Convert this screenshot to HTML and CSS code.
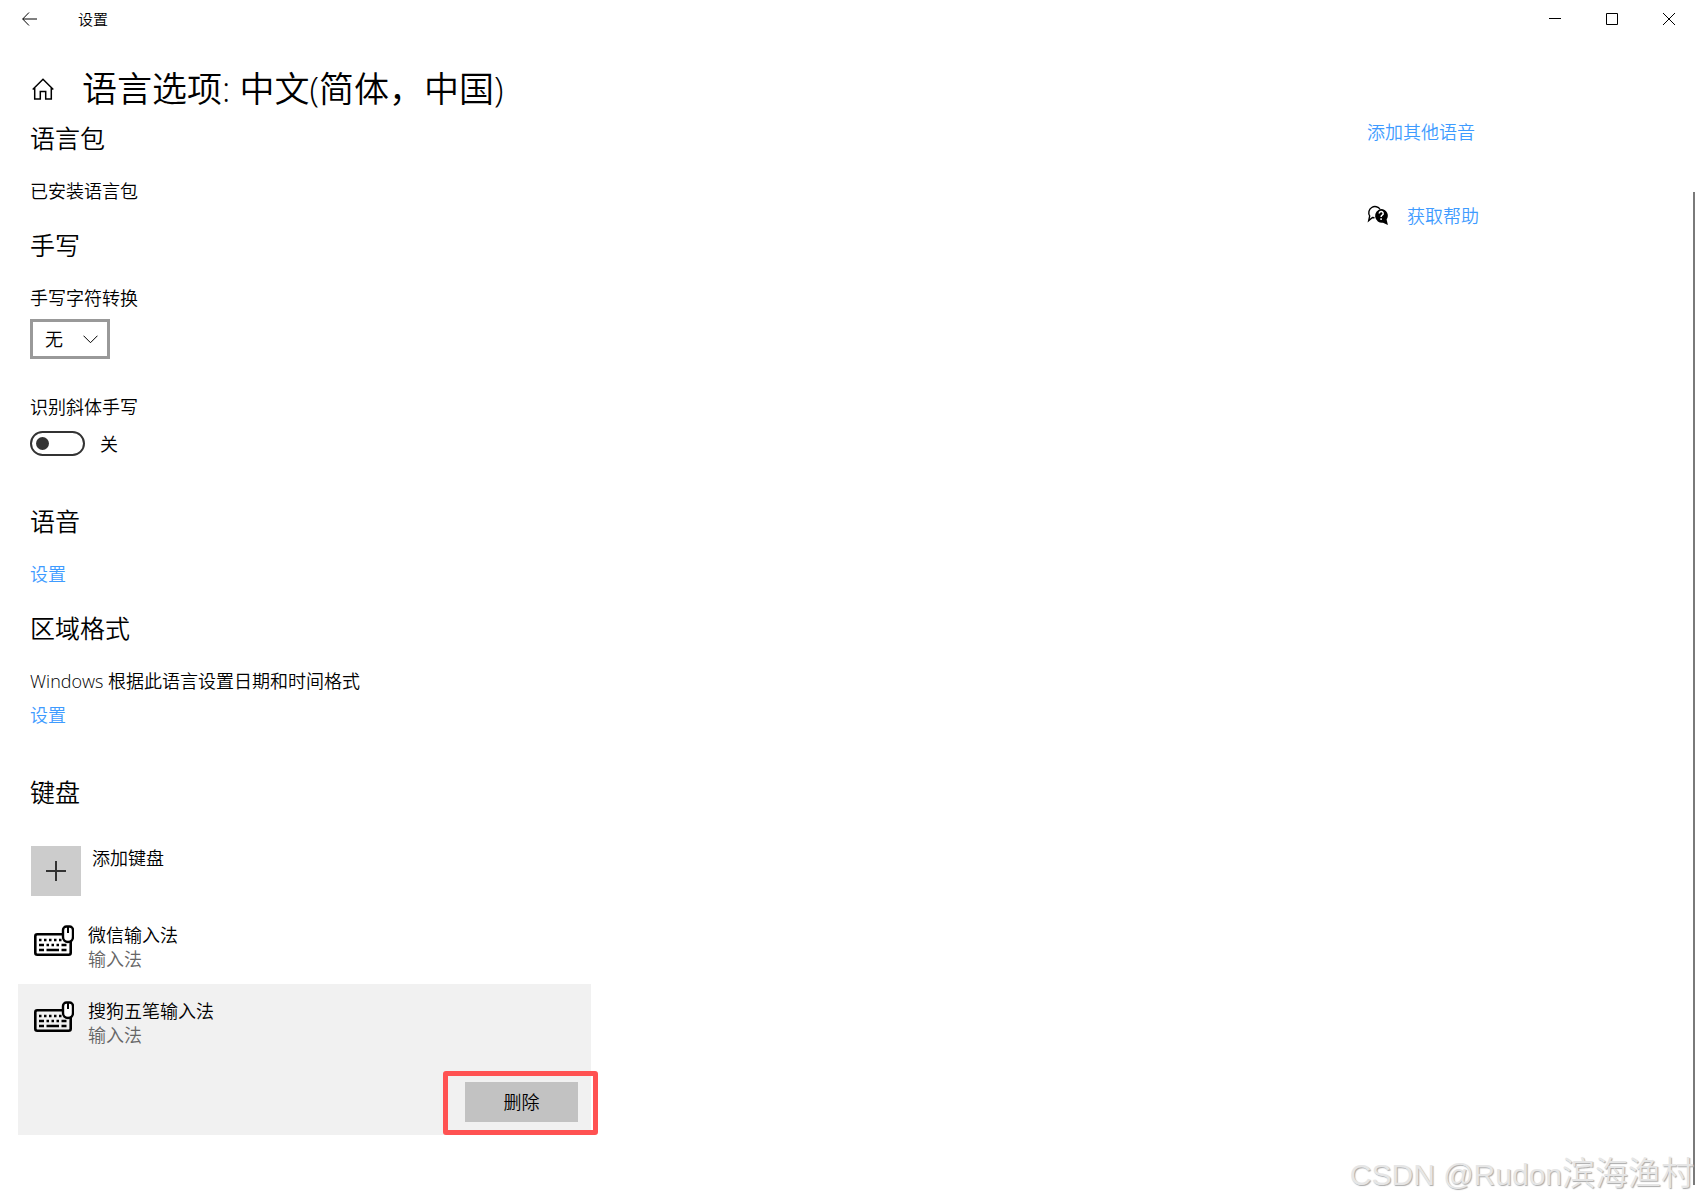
FILE: index.html
```html
<!DOCTYPE html>
<html lang="zh-CN">
<head>
    <meta charset="UTF-8">
    <meta name="viewport" content="width=device-width, initial-scale=1.0">
    <title>设置</title>
    <link rel="stylesheet" href="styles.css">
</head>
<body>
    <svg class="sprite" aria-hidden="true">
        <symbol id="icon-keyboard" viewBox="0 0 40 32">
            <rect x="1.300" y="9.200" width="35.400" height="20.600" rx="2" fill="none" stroke="currentColor" stroke-width="2.600"/>
            <path d="M5 15h2.500M10 15h2.500M15 15h2.500M20 15h2.500M25 15h2.500M5 20h5M12.500 20h2.500M17.500 20h2.500M22.500 20h2.500M27.500 20h5M5 25h5M12.500 25h12.500M27.500 25h5" fill="none" stroke="currentColor" stroke-width="2.300"/>
            <path class="mouse" d="M29 5a3.500 3.500 0 0 1 3.500-3.500h3a3.500 3.500 0 0 1 3.500 3.500v7a5 5 0 0 1-10 0z" stroke="currentColor" stroke-width="2.400"/>
            <path d="M34 1v7" fill="none" stroke="currentColor" stroke-width="2"/>
        </symbol>
    </svg>

    <header class="titlebar">
        <button class="back" type="button" aria-label="返回">
            <svg width="16" height="14" viewBox="0 0 16 14"><path d="M7 .5.7 7 7 13.500M.7 7H15"/></svg>
        </button>
        <span class="window-title">设置</span>
        <div class="window-buttons">
            <button type="button" aria-label="最小化">
                <svg width="12" height="12" viewBox="0 0 12 12"><path d="M0 5.500h12"/></svg>
            </button>
            <button type="button" aria-label="最大化">
                <svg width="12" height="12" viewBox="0 0 12 12"><path d="M.5.5h11v11H.5z"/></svg>
            </button>
            <button type="button" aria-label="关闭">
                <svg width="12" height="12" viewBox="0 0 12 12"><path d="M0 0l12 12M12 0L0 12"/></svg>
            </button>
        </div>
    </header>

    <div class="page-title">
        <a class="home" href="#" aria-label="主页">
            <svg width="22" height="22" viewBox="0 0 22 22"><path d="M.7 11.500 11 1.200l10.300 10.300M2.700 9.800V21h5.600v-7.500h5.400V21h5.600V9.800"/></svg>
        </a>
        <h1>语言选项: 中文(简体，中国)</h1>
    </div>

    <div class="content">
        <main>
            <section>
                <h2>语言包</h2>
                <p>已安装语言包</p>
            </section>

            <section class="spaced">
                <h2>手写</h2>
                <label for="convert">手写字符转换</label>
                <div class="select">
                    <select id="convert">
                        <option>无</option>
                        <option>简体</option>
                        <option>繁体</option>
                    </select>
                    <svg width="15" height="9" viewBox="0 0 15 9"><path d="M.5.7l7 7 7-7"/></svg>
                </div>
                <label for="cursive">识别斜体手写</label>
                <div class="toggle">
                    <input type="checkbox" id="cursive">
                    <span>关</span>
                </div>
            </section>

            <section>
                <h2>语音</h2>
                <p><a href="#">设置</a></p>
            </section>

            <section class="spaced">
                <h2>区域格式</h2>
                <p>Windows 根据此语言设置日期和时间格式</p>
                <p class="more"><a href="#">设置</a></p>
            </section>

            <section class="keyboards">
                <h2>键盘</h2>
                <button class="add" type="button">
                    <span class="tile">
                        <svg width="20" height="20" viewBox="0 0 20 20"><path d="M10 0v20M0 10h20"/></svg>
                    </span>
                    <span>添加键盘</span>
                </button>
                <ul>
                    <li>
                        <svg class="keyboard" width="40" height="32"><use href="#icon-keyboard"/></svg>
                        <div class="info">
                            <div>微信输入法</div>
                            <div class="kind">输入法</div>
                        </div>
                    </li>
                    <li class="selected">
                        <svg class="keyboard" width="40" height="32"><use href="#icon-keyboard"/></svg>
                        <div class="info">
                            <div>搜狗五笔输入法</div>
                            <div class="kind">输入法</div>
                        </div>
                        <button class="remove" type="button">删除</button>
                    </li>
                </ul>
            </section>
        </main>

        <aside>
            <a href="#">添加其他语音</a>
            <div class="help">
                <svg width="22" height="22" viewBox="0 0 22 22">
                    <path d="M7.500 12.700 5.500 12.500 1.700 15.600 2.700 11A6 6 0 1 1 13.200 4.500" fill="none" stroke="#000" stroke-width="1.400"/>
                    <path d="M14 4a6.700 6.700 0 0 1 5.600 10.500l1.300 5.500-4.900-2.300A6.900 6.900 0 1 1 14 4z"/>
                    <path d="M12.200 8.500a2 2 0 1 1 3 1.700c-.8.5-1.100.8-1.100 1.800M14.100 13.200v1.700" fill="none" stroke="#fff" stroke-width="1.500"/>
                </svg>
                <a href="#">获取帮助</a>
            </div>
        </aside>
    </div>

    <div class="scroll-thumb"></div>
    <div class="watermark"><span>CSDN @Rudon</span>滨海渔村</div>
</body>
</html>
```

FILE: styles.css
```css
* {
    box-sizing: border-box;
}
body {
    position: relative;
    margin: 0;
    min-height: 100vh;
    background-color: #fff;
    color: #000;
    font-family: "Open Sans", "Noto Sans CJK SC", sans-serif;
    font-weight: 350;
    font-size: 18px;
    line-height: 24px;
}
h1, h2, p, ul {
    margin: 0;
    padding: 0;
    font-weight: 350;
}
button, select {
    border: none;
    background: none;
    padding: 0;
    color: inherit;
    font: inherit;
}
a {
    color: #3e9bff;
    text-decoration: none;
}
svg {
    display: block;
    flex-shrink: 0;
}
.sprite {
    position: absolute;
    width: 0;
    height: 0;
}
.titlebar svg, .home svg, .select svg, .tile svg {
    fill: none;
    stroke: #000;
}

/* window chrome */
.titlebar {
    display: flex;
    align-items: center;
    height: 38px;
    font-size: 15px;
}
.back {
    display: flex;
    justify-content: center;
    width: 60px;
}
.window-title {
    margin-left: 18px;
}
.window-buttons {
    display: flex;
    height: 100%;
    margin-left: auto;
    margin-right: 1px;
}
.window-buttons button {
    display: flex;
    justify-content: center;
    align-items: center;
    width: 57px;
}
.page-title {
    display: flex;
    align-items: center;
    gap: 28px;
    padding: 29px 32px 0;
}
.home svg {
    stroke-width: 1.500;
}
h1 {
    font-size: 35px;
    line-height: 44px;
}

.content {
    display: flex;
    justify-content: space-between;
    padding: 11px 0 68px;
}
main {
    width: 591px;
    padding-left: 30px;
}
section {
    margin-bottom: 26px;
}
section.spaced {
    margin-bottom: 49px;
}
h2 {
    margin-bottom: 25px;
    font-size: 25px;
    line-height: 32px;
}
label {
    display: block;
}
.more {
    margin-top: 10px;
}

.select {
    position: relative;
    width: 80px;
    margin: 9px 0 36px;
}
.select select {
    display: block;
    width: 100%;
    height: 40px;
    padding-left: 12px;
    border: 3px solid #999;
    appearance: none;
}
.select svg {
    position: absolute;
    top: 16px;
    right: 12px;
    pointer-events: none;
}
.toggle {
    display: flex;
    align-items: center;
    gap: 15px;
    margin-top: 12px;
}
.toggle input {
    display: flex;
    align-items: center;
    width: 55px;
    height: 25px;
    margin: 0;
    padding: 0 4px;
    border: 2px solid #333;
    border-radius: 13px;
    appearance: none;
}
.toggle input::before {
    content: "";
    width: 13px;
    height: 13px;
    border-radius: 50%;
    background-color: #333;
}
.toggle input:checked {
    justify-content: flex-end;
}

.keyboards {
    margin-bottom: 0;
}
.keyboards h2 {
    margin-bottom: 38px;
}
.add {
    display: flex;
    gap: 11px;
    margin-left: 1px;
}
.tile {
    display: flex;
    justify-content: center;
    align-items: center;
    width: 50px;
    height: 50px;
    background-color: #ccc;
}
.tile svg {
    stroke-width: 2;
    stroke: #333;
}
.keyboards ul {
    margin: 12px 0 0 -12px;
    list-style: none;
}
.keyboards li {
    display: flex;
    flex-wrap: wrap;
    column-gap: 14px;
    padding: 15px 13px 13px 16px;
}
.selected {
    background-color: #f1f1f1;
}
.keyboard {
    margin-top: 2px;
}
.mouse {
    fill: #fff;
}
.info {
    flex: 1 1 400px;
}
.kind {
    color: #666;
}
.remove {
    position: relative;
    width: 113px;
    height: 40px;
    margin: 35px 0 0 auto;
    background-color: #c2c2c2;
}
/* red marker frame around the button */
.remove::after {
    content: "";
    position: absolute;
    top: -11px;
    right: -20px;
    bottom: -13px;
    left: -22px;
    border: 5px solid #ff5252;
    border-radius: 3px;
}

aside {
    width: 331px;
    margin-top: -2px;
}
.help {
    display: flex;
    align-items: center;
    gap: 18px;
    margin-top: 60px;
}

.scroll-thumb {
    position: absolute;
    top: 192px;
    right: 3px;
    bottom: 19px;
    width: 2px;
    background-color: #7a7a7a;
}
.watermark {
    position: absolute;
    right: 4px;
    bottom: 9px;
    color: #e6e6e6;
    font-family: "Liberation Sans", "Noto Sans CJK SC", sans-serif;
    font-size: 33px;
    line-height: 40px;
    text-shadow: 1px 1px 1px #aaa;
}
.watermark span {
    font-size: 30px;
}
```
